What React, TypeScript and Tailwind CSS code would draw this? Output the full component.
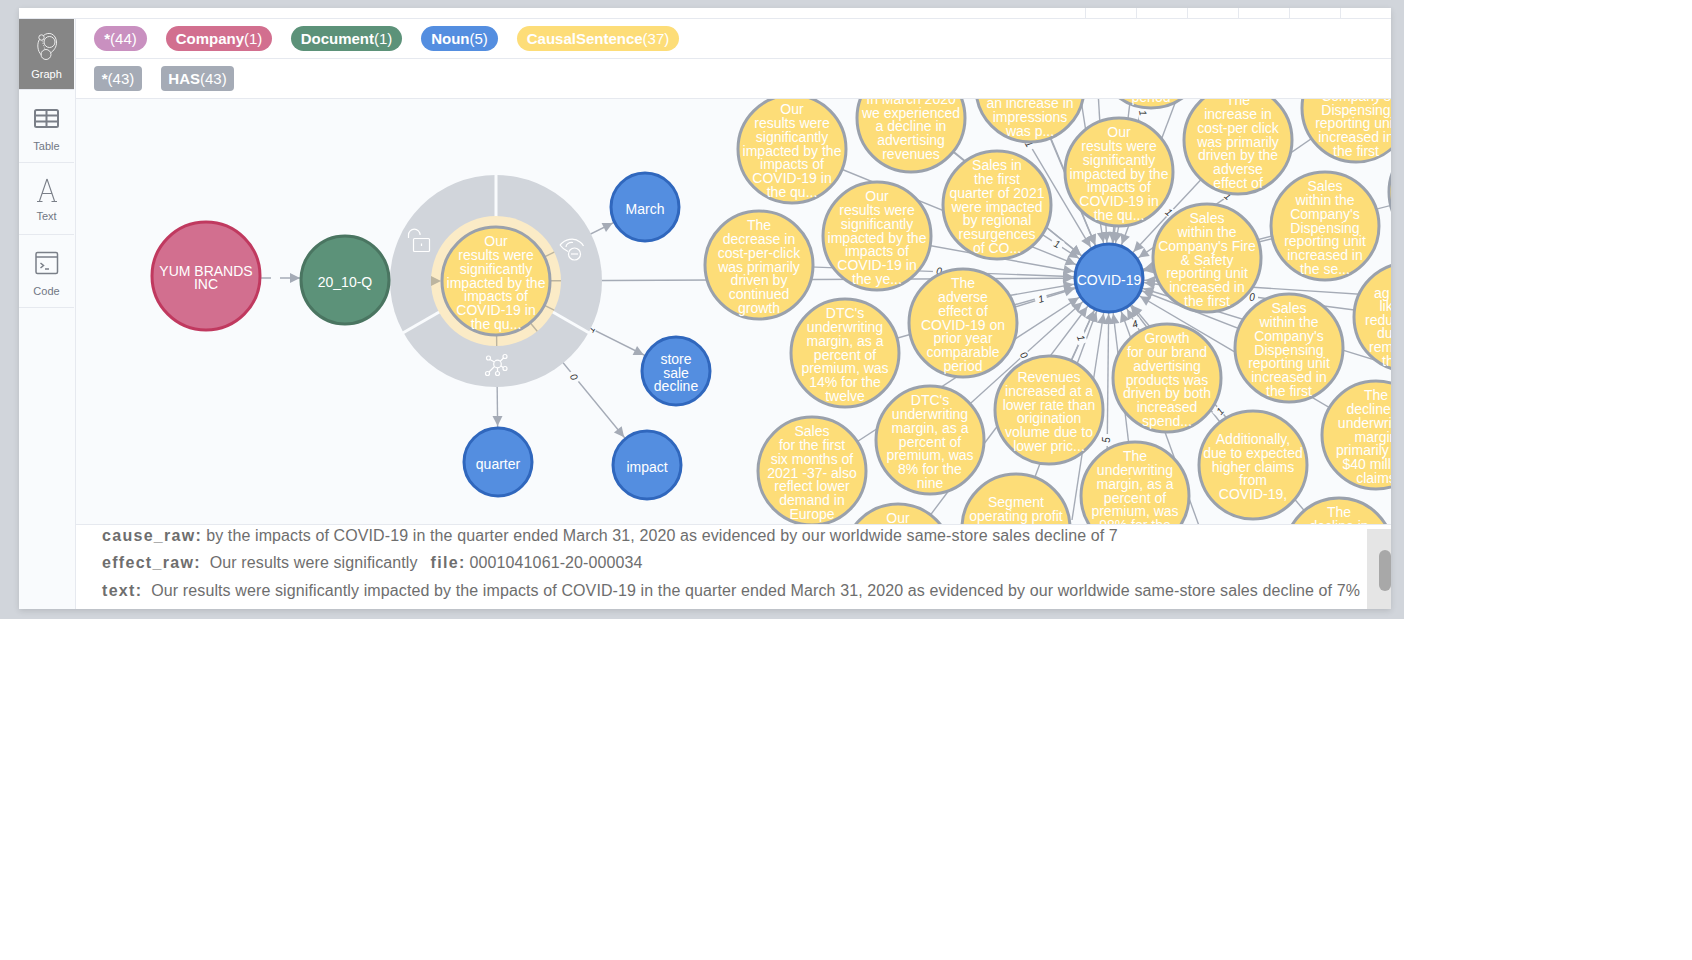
import React from "react";

type GraphNode = { x: number; y: number; lines: string[] };

const HUB = { x: 1109, y: 278 };
const CENTER = { x: 496, y: 281 };

const sentences: GraphNode[] = [
  { x: 792, y: 149, lines: ["Our", "results were", "significantly", "impacted by the", "impacts of", "COVID-19 in", "the qu..."] },
  { x: 911, y: 118, lines: ["", "In March 2020", "we experienced", "a decline in", "advertising", "revenues"] },
  { x: 1030, y: 88, lines: ["", "", "", "", "an increase in", "impressions", "was p..."] },
  { x: 1151, y: 54, lines: ["", "", "", "", "", "", "period"] },
  { x: 1356, y: 108, lines: ["Sales", "within the", "Company's", "Dispensing", "reporting unit", "increased in", "the first"] },
  { x: 1443, y: 192, lines: [] },
  { x: 1238, y: 140, lines: ["The", "increase in", "cost-per click", "was primarily", "driven by the", "adverse", "effect of"] },
  { x: 1119, y: 172, lines: ["Our", "results were", "significantly", "impacted by the", "impacts of", "COVID-19 in", "the qu..."] },
  { x: 1325, y: 226, lines: ["Sales", "within the", "Company's", "Dispensing", "reporting unit", "increased in", "the se..."] },
  { x: 997, y: 205, lines: ["Sales in", "the first", "quarter of 2021", "were impacted", "by regional", "resurgences", "of CO..."] },
  { x: 877, y: 236, lines: ["Our", "results were", "significantly", "impacted by the", "impacts of", "COVID-19 in", "the ye..."] },
  { x: 759, y: 265, lines: ["The", "decrease in", "cost-per-click", "was primarily", "driven by", "continued", "growth"] },
  { x: 1207, y: 258, lines: ["Sales", "within the", "Company's Fire", "& Safety", "reporting unit", "increased in", "the first"] },
  { x: 1408, y: 317, lines: [] },
  { x: 845, y: 353, lines: ["DTC's", "underwriting", "margin, as a", "percent of", "premium, was", "14% for the", "twelve"] },
  { x: 963, y: 323, lines: ["The", "adverse", "effect of", "COVID-19 on", "prior year", "comparable", "period"] },
  { x: 1289, y: 348, lines: ["Sales", "within the", "Company's", "Dispensing", "reporting unit", "increased in", "the first"] },
  { x: 1167, y: 378, lines: ["Growth", "for our brand", "advertising", "products was", "driven by both", "increased", "spend..."] },
  { x: 1049, y: 410, lines: ["Revenues", "increased at a", "lower rate than", "origination", "volume due to", "lower pric..."] },
  { x: 930, y: 440, lines: ["DTC's", "underwriting", "margin, as a", "percent of", "premium, was", "8% for the", "nine"] },
  { x: 1253, y: 465, lines: ["Additionally,", "due to expected", "higher claims", "from", "COVID-19,"] },
  { x: 1376, y: 435, lines: ["The", "decline in", "underwriting", "margin", "primarily due", "$40 million", "claims"] },
  { x: 812, y: 471, lines: ["Sales", "for the first", "six months of", "2021 -37- also", "reflect lower", "demand in", "Europe"] },
  { x: 1135, y: 496, lines: ["The", "underwriting", "margin, as a", "percent of", "premium, was", "98% for the", "nine"] },
  { x: 1016, y: 528, lines: ["Segment", "operating profit", "", "", ""] },
  { x: 898, y: 558, lines: ["Our", "results were", "", "", "", "", ""] },
  { x: 1339, y: 552, lines: ["The", "decline in", "", "", "", "", ""] },
];

// spokes whose source node sits outside the visible part of the canvas
const hiddenSources = [
  [987, 73], [1022, 71], [1075, 62], [1095, 40], [1135, 60], [1210, 556], [1106, 560],
  [1072, 520], [1046, 415], [1440, 380], [1450, 300], [950, 306], [905, 112], [1180, 90],
];

const edgeLabels = [
  { x: 591, y: 329, r: -60, t: "1" },
  { x: 574, y: 377, r: 60, t: "0" },
  { x: 1057, y: 244, r: 25, t: "1" },
  { x: 939, y: 271, r: 5, t: "0" },
  { x: 1041, y: 299, r: -15, t: "1" },
  { x: 1169, y: 212, r: 40, t: "1" },
  { x: 1252, y: 297, r: 0, t: "0" },
  { x: 1135, y: 324, r: -20, t: "4" },
  { x: 1081, y: 338, r: 70, t: "1" },
  { x: 1024, y: 355, r: 55, t: "0" },
  { x: 1106, y: 440, r: -90, t: "5" },
  { x: 1220, y: 411, r: -50, t: "1" },
  { x: 1029, y: 144, r: 60, t: "1" },
  { x: 1143, y: 113, r: 80, t: "1" },
  { x: 1228, y: 196, r: 40, t: "1" },
];

const fontFamily = "'Liberation Sans', Arial, sans-serif";

function arrowHead(fromX: number, fromY: number, toX: number, toY: number, gap: number, half: number) {
  const angle = Math.atan2(toY - fromY, toX - fromX);
  const tipX = toX - Math.cos(angle) * gap;
  const tipY = toY - Math.sin(angle) * gap;
  const backX = tipX - Math.cos(angle) * 10;
  const backY = tipY - Math.sin(angle) * 10;
  const nx = -Math.sin(angle) * half;
  const ny = Math.cos(angle) * half;
  return `${tipX},${tipY} ${backX + nx},${backY + ny} ${backX - nx},${backY - ny}`;
}

function Edge({ x1, y1, x2, y2, gap }: { x1: number; y1: number; x2: number; y2: number; gap: number }) {
  return (
    <g>
      <line x1={x1} y1={y1} x2={x2} y2={y2} stroke="#a5abb6" strokeWidth={1.4} />
      <polygon points={arrowHead(x1, y1, x2, y2, gap, 5)} fill="#a5abb6" />
    </g>
  );
}

function NodeText({ x, y, lines }: { x: number; y: number; lines: string[] }) {
  const first = y + 6.5 - ((lines.length - 1) / 2) * 13.7;
  return (
    <text textAnchor="middle" fontSize={14} fill="#fff" fontFamily={fontFamily}>
      {lines.map((line, i) =>
        line ? (
          <tspan key={i} x={x} y={first + i * 13.7}>
            {line}
          </tspan>
        ) : null
      )}
    </text>
  );
}

function Circle({ x, y, r, fill, stroke, lines }: { x: number; y: number; r: number; fill: string; stroke: string; lines: string[] }) {
  return (
    <g>
      <circle cx={x} cy={y} r={r - 1} fill={fill} stroke={stroke} strokeWidth={3} />
      <NodeText x={x} y={y} lines={lines} />
    </g>
  );
}

function Graph() {
  const outgoing = [
    { x: 645, y: 207 },
    { x: HUB.x, y: HUB.y },
    { x: 676, y: 371 },
    { x: 647, y: 465 },
    { x: 498, y: 462 },
  ];
  return (
    <svg viewBox="76 99 1315 425" className="block h-[425px] w-full bg-[#f9fbfd]">
      {/* spokes into COVID-19 */}
      {sentences.map((n, i) => (
        <Edge key={i} x1={n.x} y1={n.y} x2={HUB.x} y2={HUB.y} gap={36} />
      ))}
      {hiddenSources.map(([x, y], i) => (
        <Edge key={i} x1={x} y1={y} x2={HUB.x} y2={HUB.y} gap={36} />
      ))}
      <Edge x1={CENTER.x} y1={CENTER.y} x2={HUB.x} y2={HUB.y} gap={36} />
      <Edge x1={206} y1={278} x2={345} y2={278} gap={45} />
      <rect x={271} y={272} width={9} height={12} fill="#f9fbfd" />
      {outgoing.slice(0, 1).concat(outgoing.slice(2)).map((t, i) => (
        <Edge key={i} x1={CENTER.x} y1={CENTER.y} x2={t.x} y2={t.y} gap={36} />
      ))}

      {edgeLabels.map((l, i) => (
        <g key={i} transform={`translate(${l.x} ${l.y}) rotate(${l.r})`}>
          <rect x={-6} y={-5} width={12} height={10} fill="#f9fbfd" />
          <text textAnchor="middle" y={3.5} fontSize={10} fontStyle="italic" fill="#333" fontFamily={fontFamily}>
            {l.t}
          </text>
        </g>
      ))}

      {/* arc menu around the selected node */}
      <circle cx={CENTER.x} cy={CENTER.y} r={106} fill="#d1d5db" />
      <g stroke="#f9fbfd" strokeWidth={3}>
        <line x1={CENTER.x} y1={CENTER.y - 60} x2={CENTER.x} y2={CENTER.y - 108} />
        <line x1={CENTER.x - 55} y1={CENTER.y + 30} x2={CENTER.x - 95} y2={CENTER.y + 53} />
        <line x1={CENTER.x + 55} y1={CENTER.y + 30} x2={CENTER.x + 95} y2={CENTER.y + 53} />
      </g>
      <circle cx={CENTER.x} cy={CENTER.y} r={65} fill="#fbebc6" />
      {outgoing.map((t, i) => {
        const a = Math.atan2(t.y - CENTER.y, t.x - CENTER.x);
        return (
          <line
            key={i}
            x1={CENTER.x + Math.cos(a) * 52}
            y1={CENTER.y + Math.sin(a) * 52}
            x2={CENTER.x + Math.cos(a) * 65}
            y2={CENTER.y + Math.sin(a) * 65}
            stroke="#bdb59f"
            strokeWidth={1.4}
          />
        );
      })}
      <polygon points="441,281 431,276 431,286" fill="#bdb59f" />

      {/* lock */}
      <g fill="none" stroke="#fff" strokeWidth={1.2}>
        <rect x={413.5} y={238.5} width={16} height={13} rx={1} />
        <path d="M408.5 238v-3a5.8 5.8 0 0 1 11.6 0" />
        <path d="M421.5 243.5v2.5" />
      </g>
      {/* eye with minus */}
      <g fill="none" stroke="#fff" strokeWidth={1.2}>
        <path d="M560 245c5-6 14-8 20-3 1.500 1 3 3 3.500 4M560 245c2 3 5 5 8 6.500" />
        <path d="M566 247c0-3 3-5 7-4.500" />
        <circle cx={574.500} cy={254} r={6} />
        <path d="M571 254h7" />
      </g>
      {/* expand */}
      <g fill="none" stroke="#fff" strokeWidth={1.2}>
        <circle cx={497.500} cy={364} r={3.800} />
        <circle cx={488.500} cy={358} r={2} />
        <circle cx={505} cy={356.500} r={2} />
        <circle cx={505} cy={368.500} r={2} />
        <circle cx={497.500} cy={373.500} r={2} />
        <circle cx={487.500} cy={373.500} r={2} />
        <path d="M490 359.500l4.500 2.500M503.500 358l-3.500 3.500M503.200 367.500l-2.500-1.800M497.500 368v3.500M489 372l5.500-5.500" />
      </g>

      <Circle x={206} y={276} r={55} fill="#d26f8f" stroke="#c0395f" lines={["YUM BRANDS", "INC"]} />
      <Circle x={345} y={280} r={45} fill="#5c9279" stroke="#4a7561" lines={["20_10-Q"]} />
      <Circle x={CENTER.x} y={CENTER.y} r={55} fill="#fddd78" stroke="#9aa1ac" lines={["Our", "results were", "significantly", "impacted by the", "impacts of", "COVID-19 in", "the qu..."]} />
      <Circle x={645} y={207} r={35} fill="#548ee0" stroke="#3067bd" lines={["March"]} />
      <Circle x={676} y={371} r={35} fill="#548ee0" stroke="#3067bd" lines={["store", "sale", "decline"]} />
      <Circle x={498} y={462} r={35} fill="#548ee0" stroke="#3067bd" lines={["quarter"]} />
      <Circle x={647} y={465} r={35} fill="#548ee0" stroke="#3067bd" lines={["impact"]} />

      {sentences.map((n, i) => (
        <Circle key={i} x={n.x} y={n.y} r={55} fill="#fddd78" stroke="#9aa1ac" lines={n.lines} />
      ))}
      <text fontSize={14} fill="#fff" fontFamily={fontFamily}>
        <tspan x={1374} y={298}>ag</tspan>
        <tspan x={1379.500} y={311}>lik</tspan>
        <tspan x={1365} y={325}>redu</tspan>
        <tspan x={1377} y={338}>du</tspan>
        <tspan x={1369} y={352}>rem</tspan>
        <tspan x={1382} y={366}>th</tspan>
      </text>

      <Circle x={HUB.x} y={HUB.y} r={35} fill="#548ee0" stroke="#3067bd" lines={["COVID-19"]} />
    </svg>
  );
}

function SideItem({ label, active, height, labelClass, children }: { label: string; active?: boolean; height: string; labelClass: string; children: React.ReactNode }) {
  return (
    <div
      className={`flex flex-col items-center border-b border-[#e6e9ef] ${height} ${
        active ? "bg-[#868686] text-white" : "text-[#717784]"
      }`}
    >
      <div className="mt-[12px] h-[36px] w-[30px]">{children}</div>
      <span className={`text-[11px] leading-[13px] ${labelClass}`}>{label}</span>
    </div>
  );
}

function Tag({ name, count, color, round }: { name: string; count: string; color: string; round?: boolean }) {
  return (
    <span
      className={`flex h-[25px] items-center justify-center whitespace-nowrap pt-[1px] text-[15px] text-white ${color} ${
        round ? "rounded-[13px]" : "rounded-[4px]"
      }`}
    >
      <b>{name}</b>
      <span>{count}</span>
    </span>
  );
}

export default function App() {
  return (
    <div className="h-[960px] w-[1692px] bg-white" style={{ fontFamily }}>
      <div className="h-[619px] w-[1404px] bg-[#d1d5db] pl-[19px] pt-[8px]">
        <div className="flex h-[601px] w-[1372px] flex-col bg-white shadow-[0_2px_6px_rgba(0,0,0,0.12)]">
          <div className="flex h-[11px] shrink-0 justify-end border-b border-[#e6e9ef]">
            {[1, 2, 3, 4, 5, 6].map((c) => (
              <div key={c} className="h-full w-[51px] border-l border-[#e6e9ef]" />
            ))}
          </div>
          <div className="flex min-h-0 flex-1">
            <div className="w-[57px] shrink-0 border-r border-[#e6e9ef] bg-[#f9fbfd] pr-[1px]">
              <SideItem label="Graph" active height="h-[71px]" labelClass="mt-[1px]">
                <svg viewBox="0 0 30 36" className="h-[36px] w-[30px]" fill="none" stroke="#fff" strokeWidth={1} opacity={0.85}>
                  <circle cx={17.500} cy={11} r={5.500} />
                  <circle cx={9.500} cy={6.500} r={2.700} />
                  <circle cx={14} cy={23.500} r={5} />
                  <path d="M11.500 4.500C17 0 24 3 24.500 11c.3 5-3 9-6 11M9.500 24C5 20 5 12 7.500 8.500" />
                  <path d="M10 9.500l3 9" strokeDasharray="1 1.500" />
                </svg>
              </SideItem>
              <SideItem label="Table" height="h-[73px]" labelClass="mt-[2px]">
                <svg viewBox="0 0 30 36" className="h-[36px] w-[30px]" fill="none" stroke="#7a7f88" strokeWidth={2}>
                  <rect x={3} y={8} width={23} height={17} rx={1.500} />
                  <path d="M3 13.500h23M3 19.500h23M14.500 8v17" />
                </svg>
              </SideItem>
              <SideItem label="Text" height="h-[72px]" labelClass="-mt-[1px]">
                <svg viewBox="0 0 30 36" className="h-[36px] w-[30px]" fill="none" stroke="#7a7f88" strokeWidth={1.100}>
                  <path d="M15 4L7.500 26M15 4l7.500 22M10 18.500h10.500M5 26.500h5.500M19.500 26.500H25" />
                </svg>
              </SideItem>
              <SideItem label="Code" height="h-[73px]" labelClass="mt-[2px]">
                <svg viewBox="0 0 30 36" className="h-[36px] w-[30px]" fill="none" stroke="#7a7f88" strokeWidth={1.500}>
                  <rect x={4} y={5.500} width={21.500} height={21} rx={1.500} />
                  <path d="M4 10h21.500" />
                  <path d="M8.500 16l3 2.500-3 2.500M13 22h4" />
                </svg>
              </SideItem>
            </div>
            <div className="flex min-w-0 flex-1 flex-col">
              <div className="flex h-[40px] shrink-0 items-center gap-[19px] border-b border-[#e6e9ef] pl-[18px]">
                <div className="w-[53px]"><Tag round name="*" count="(44)" color="bg-[#c990c0]" /></div>
                <div className="w-[106px]"><Tag round name="Company" count="(1)" color="bg-[#d26f8f]" /></div>
                <div className="w-[111px]"><Tag round name="Document" count="(1)" color="bg-[#5c9279]" /></div>
                <div className="w-[77px]"><Tag round name="Noun" count="(5)" color="bg-[#548ee0]" /></div>
                <div className="w-[162px]"><Tag round name="CausalSentence" count="(37)" color="bg-[#fddd78]" /></div>
              </div>
              <div className="flex h-[40px] shrink-0 items-center gap-[19px] border-b border-[#e6e9ef] pl-[18px]">
                <div className="w-[48px]"><Tag name="*" count="(43)" color="bg-[#a5abb6]" /></div>
                <div className="w-[73px]"><Tag name="HAS" count="(43)" color="bg-[#a5abb6]" /></div>
              </div>
              <Graph />
              <div className="flex min-h-0 flex-1 border-t border-[#e6e9ef] bg-white text-[16px] tracking-[0.11px] text-[#6e6e6e]">
                <div className="min-w-0 flex-1 overflow-hidden whitespace-nowrap pl-[26px]">
                  <div className="h-[26px] leading-[22px]">
                    <b className="mr-[4px] tracking-[1.3px]">cause_raw:</b>
                    by the impacts of COVID-19 in the quarter ended March 31, 2020 as evidenced by our worldwide same-store sales decline of 7
                  </div>
                  <div className="h-[28px] leading-[24px]">
                    <b className="mr-[9px] tracking-[1.3px]">effect_raw:</b>
                    Our results were significantly
                    <b className="ml-[13px] mr-[4px] tracking-[1.3px]">file:</b>
                    0001041061-20-000034
                  </div>
                  <div className="h-[28px] leading-[24px]">
                    <b className="mr-[9px] tracking-[1.3px]">text:</b>
                    Our results were significantly impacted by the impacts of COVID-19 in the quarter ended March 31, 2020 as evidenced by our worldwide same-store sales decline of 7%
                  </div>
                </div>
                <div className="mt-[4px] w-[24px] shrink-0 bg-[#e5e5e5] pl-[12px] pt-[21px]">
                  <div className="h-[41px] w-[12px] rounded-[6px] bg-[#a8a8a8]" />
                </div>
              </div>
            </div>
          </div>
        </div>
      </div>
    </div>
  );
}
